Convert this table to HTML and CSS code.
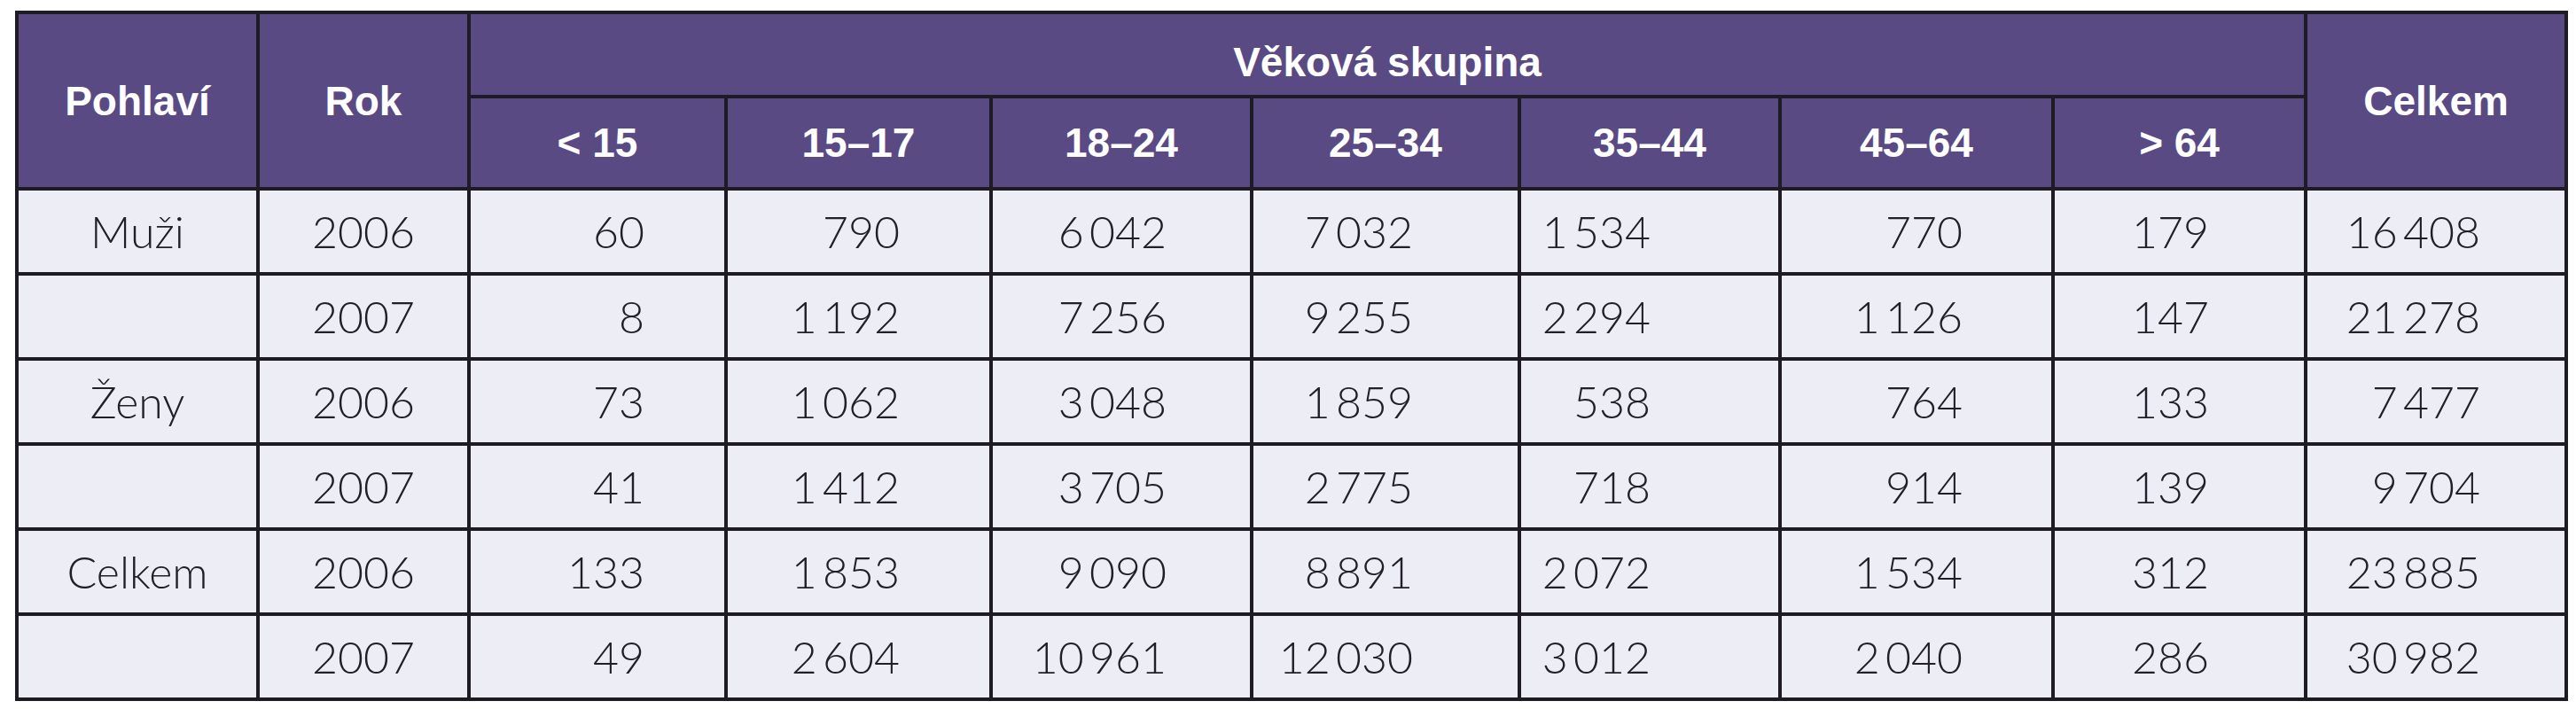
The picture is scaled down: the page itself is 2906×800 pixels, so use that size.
FILE: index.html
```html
<!DOCTYPE html>
<html lang="cs">
<head>
<meta charset="utf-8">
<title>Věková skupina</title>
<link rel="stylesheet" href="styles.css">
</head>
<body>
<div class="wrap">
<table class="stats">
<colgroup>
<col class="w-sex"><col class="w-year"><col class="w-a1"><col class="w-a2"><col class="w-a3"><col class="w-a4"><col class="w-a5"><col class="w-a6"><col class="w-a7"><col class="w-tot">
</colgroup>
<thead>
<tr class="hr1">
<th rowspan="2">Pohlaví</th>
<th rowspan="2">Rok</th>
<th colspan="7" class="group">Věková skupina</th>
<th rowspan="2">Celkem</th>
</tr>
<tr class="hr2">
<th>&lt; 15</th><th>15–17</th><th>18–24</th><th>25–34</th><th>35–44</th><th>45–64</th><th>&gt; 64</th>
</tr>
</thead>
<tbody>
<tr><td>Muži</td><td>2006</td><td>60</td><td>790</td><td>6&#8201;042</td><td>7&#8201;032</td><td>1&#8201;534</td><td>770</td><td>179</td><td>16&#8201;408</td></tr>
<tr><td></td><td>2007</td><td>8</td><td>1&#8201;192</td><td>7&#8201;256</td><td>9&#8201;255</td><td>2&#8201;294</td><td>1&#8201;126</td><td>147</td><td>21&#8201;278</td></tr>
<tr><td>Ženy</td><td>2006</td><td>73</td><td>1&#8201;062</td><td>3&#8201;048</td><td>1&#8201;859</td><td>538</td><td>764</td><td>133</td><td>7&#8201;477</td></tr>
<tr><td></td><td>2007</td><td>41</td><td>1&#8201;412</td><td>3&#8201;705</td><td>2&#8201;775</td><td>718</td><td>914</td><td>139</td><td>9&#8201;704</td></tr>
<tr><td>Celkem</td><td>2006</td><td>133</td><td>1&#8201;853</td><td>9&#8201;090</td><td>8&#8201;891</td><td>2&#8201;072</td><td>1&#8201;534</td><td>312</td><td>23&#8201;885</td></tr>
<tr><td></td><td>2007</td><td>49</td><td>2&#8201;604</td><td>10&#8201;961</td><td>12&#8201;030</td><td>3&#8201;012</td><td>2&#8201;040</td><td>286</td><td>30&#8201;982</td></tr>
</tbody>
</table>
</div>
</body>
</html>
```
FILE: styles.css
```css
html, body {
  margin: 0;
  padding: 0;
  background: #ffffff;
}

.wrap {
  padding: 12px 0 0 17px;
}

.stats {
  border-collapse: collapse;
  table-layout: fixed;
  width: 2880px;
  border: 4px solid #1f1b24;
}

.w-sex { width: 272px; }
.w-year { width: 238px; }
.w-a1 { width: 290px; }
.w-a2 { width: 299px; }
.w-a3 { width: 294px; }
.w-a4 { width: 302px; }
.w-a5 { width: 294px; }
.w-a6 { width: 308px; }
.w-a7 { width: 285px; }
.w-tot { width: 294px; }

.stats th,
.stats td {
  border: 4px solid #1f1b24;
  padding: 0;
  overflow: hidden;
  white-space: nowrap;
}

.stats th {
  background: #5a4a84;
  color: #ffffff;
  font-family: "Liberation Sans", Arial, sans-serif;
  font-weight: 700;
  font-size: 46px;
  text-align: center;
  vertical-align: middle;
}

.hr1 th { height: 91px; }
.hr1 th.group { padding-top: 16px; height: 75px; }
.hr2 th { height: 100px; }

.stats td {
  background: #ededf6;
  color: #222026;
  font-family: Lato, "Open Sans", sans-serif;
  font-weight: 300;
  font-size: 50px;
  height: 92px;
  text-align: right;
  vertical-align: middle;
}

.stats td:nth-child(1),
.stats td:nth-child(2) {
  text-align: center;
}

.stats td:nth-child(3) { padding-right: 90px; }
.stats td:nth-child(4) { padding-right: 101px; }
.stats td:nth-child(5) { padding-right: 94px; }
.stats td:nth-child(6) { padding-right: 118px; }
.stats td:nth-child(7) { padding-right: 144px; }
.stats td:nth-child(8) { padding-right: 100px; }
.stats td:nth-child(9) { padding-right: 107px; }
.stats td:nth-child(10) { padding-right: 95px; }
```
